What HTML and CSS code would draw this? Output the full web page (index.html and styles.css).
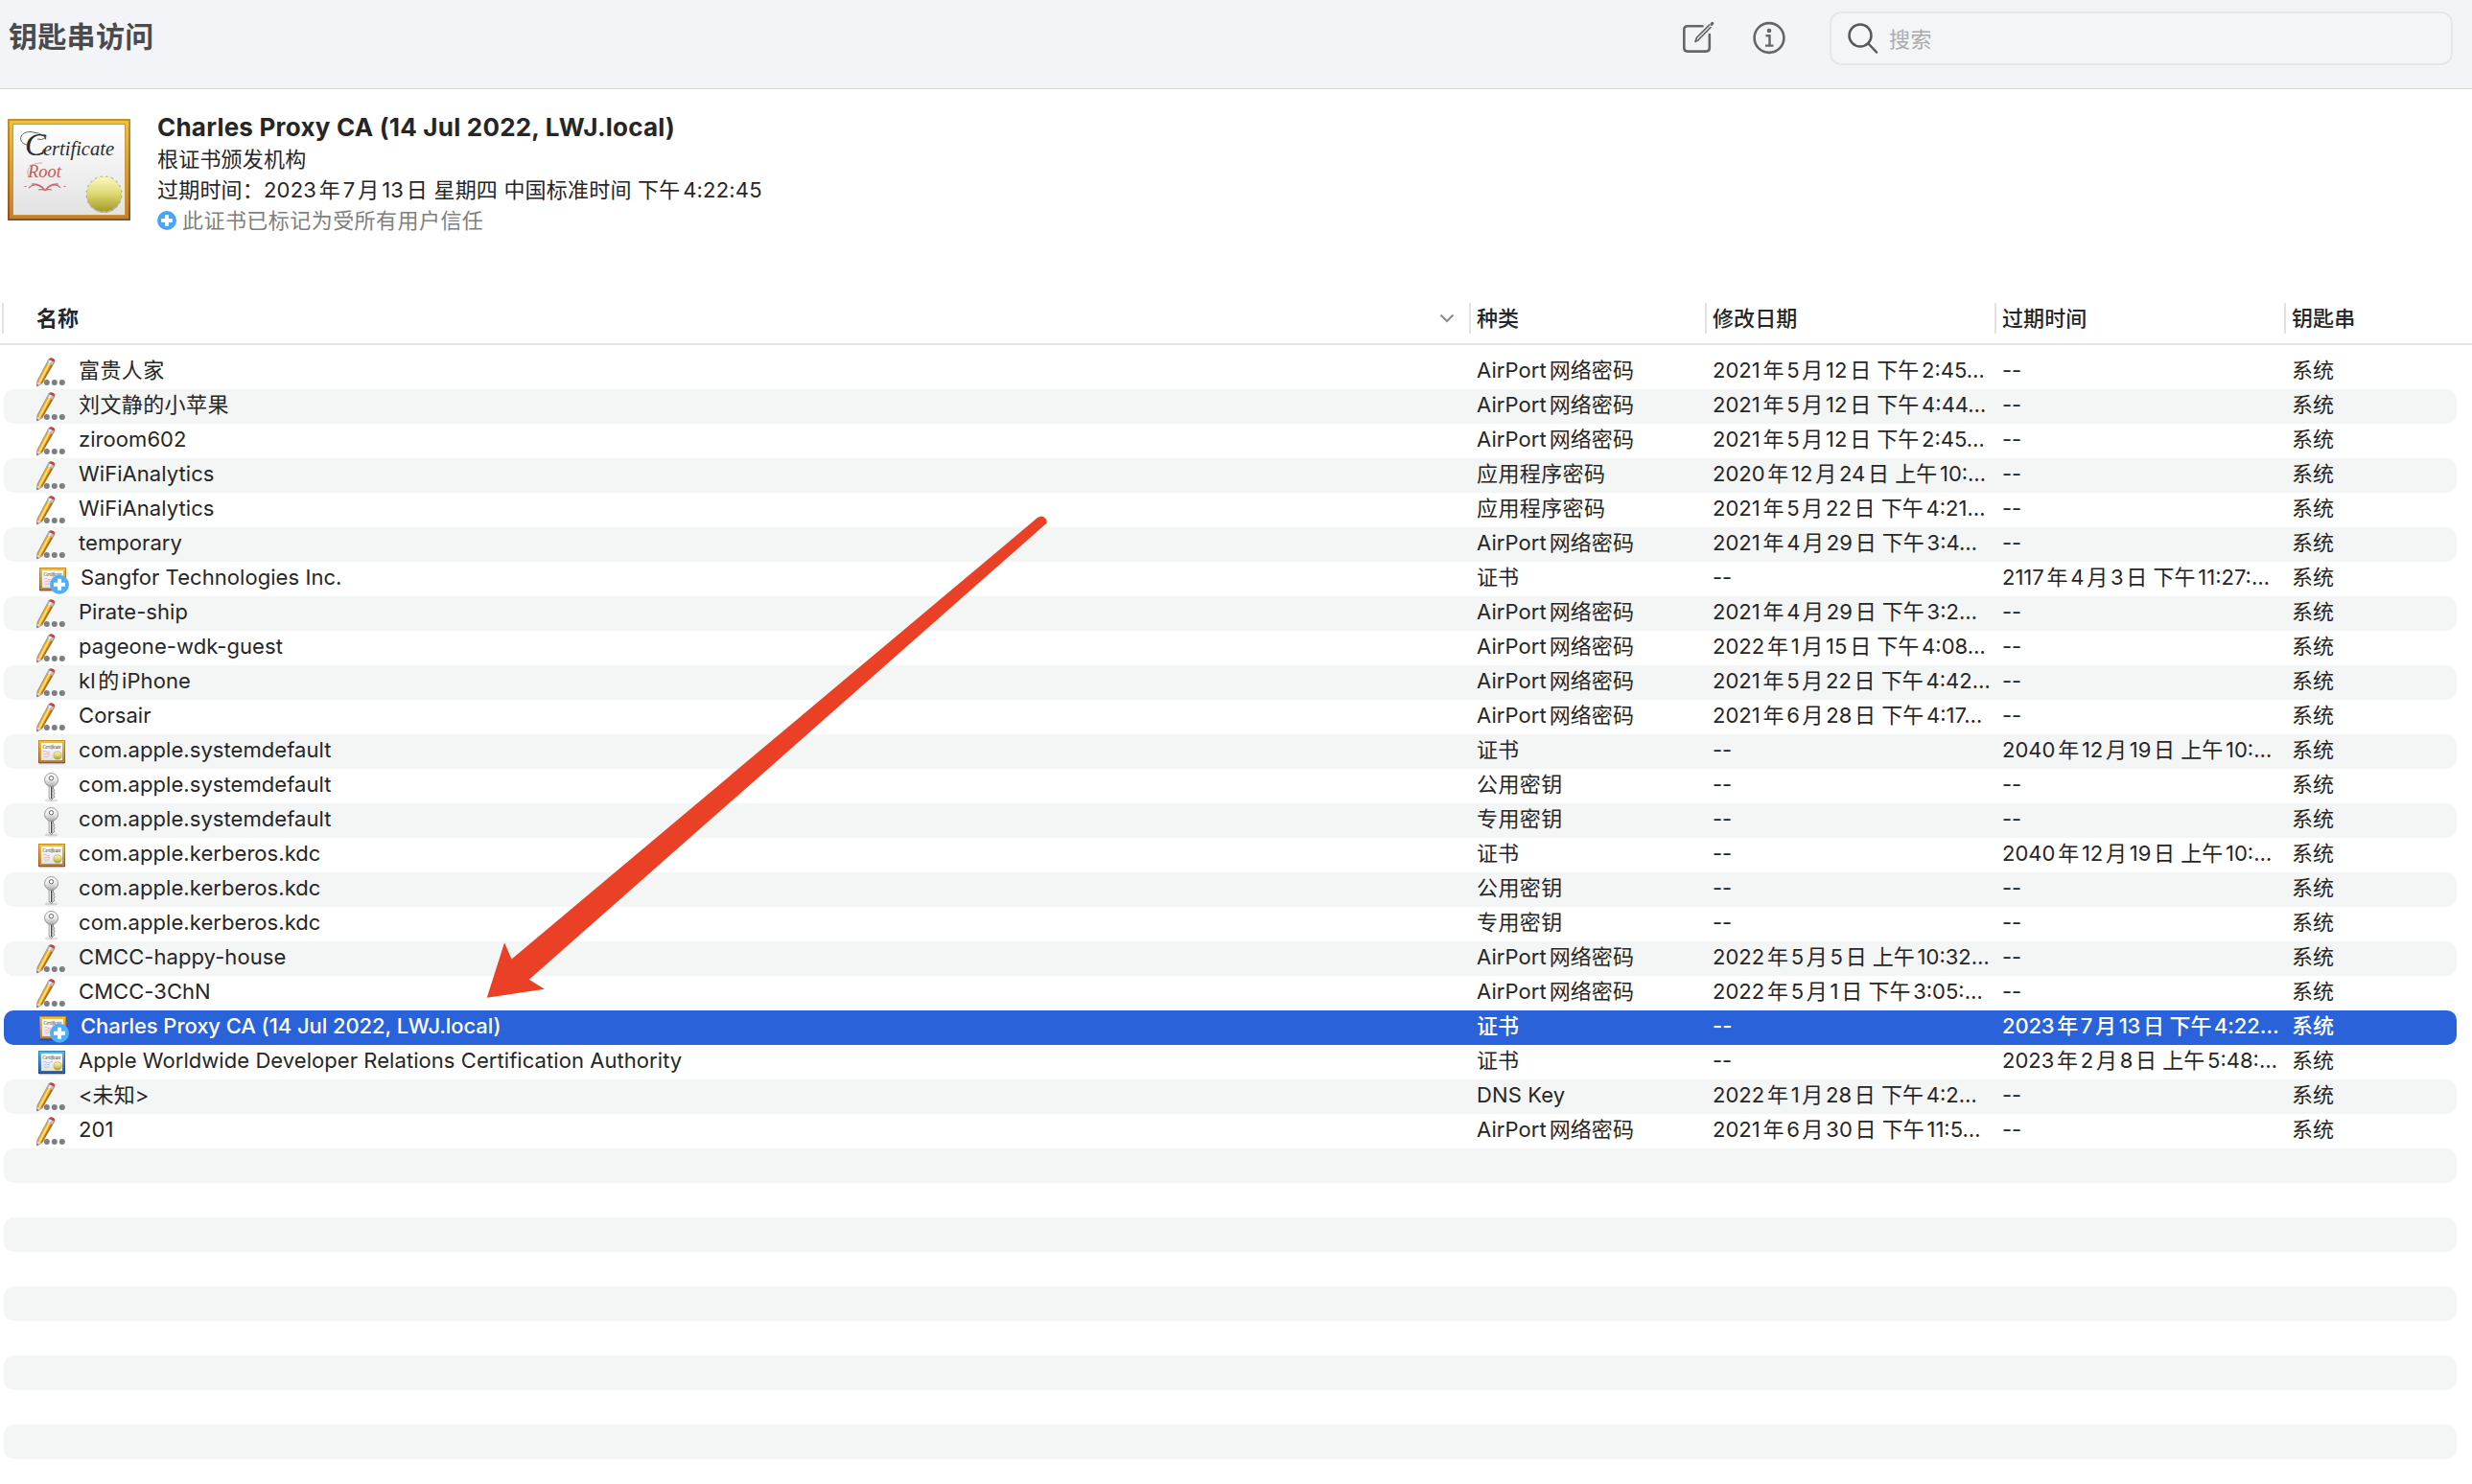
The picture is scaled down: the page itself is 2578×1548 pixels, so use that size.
FILE: index.html
```html
<!DOCTYPE html>
<html lang="zh-CN">
<head>
<meta charset="utf-8">
<title>钥匙串访问</title>
<link rel="stylesheet" href="styles.css">
</head>
<body>
<svg class="defs" width="0" height="0" aria-hidden="true">
  <defs>
    <linearGradient id="gold" x1="0" y1="0" x2="0" y2="1"><stop offset="0" stop-color="#e9c43f"/><stop offset="1" stop-color="#c67f2b"/></linearGradient>
    <linearGradient id="goldEdge" x1="0" y1="0" x2="0" y2="1"><stop offset="0" stop-color="#c98d2b"/><stop offset="1" stop-color="#94501a"/></linearGradient>
    <linearGradient id="blue" x1="0" y1="0" x2="0" y2="1"><stop offset="0" stop-color="#5cb6e4"/><stop offset="1" stop-color="#2a62ad"/></linearGradient>
    <linearGradient id="blueEdge" x1="0" y1="0" x2="0" y2="1"><stop offset="0" stop-color="#3187b8"/><stop offset="1" stop-color="#17458a"/></linearGradient>
    <linearGradient id="paper" x1="0" y1="0" x2="0" y2="1"><stop offset="0" stop-color="#ffffff"/><stop offset="1" stop-color="#e2e2e2"/></linearGradient>
    <linearGradient id="seal" x1="0" y1="0" x2="0" y2="1"><stop offset="0" stop-color="#fbfac0"/><stop offset="0.5" stop-color="#dcd873"/><stop offset="1" stop-color="#a39b20"/></linearGradient>
    <linearGradient id="metal" x1="0" y1="0" x2="0" y2="1"><stop offset="0" stop-color="#ffffff"/><stop offset="0.5" stop-color="#ececec"/><stop offset="1" stop-color="#a8a8a8"/></linearGradient>
    <clipPath id="burst">
      <rect x="-13.8" y="-13.8" width="27.6" height="27.6"/>
      <rect x="-13.8" y="-13.8" width="27.6" height="27.6" transform="rotate(18)"/>
      <rect x="-13.8" y="-13.8" width="27.6" height="27.6" transform="rotate(36)"/>
      <rect x="-13.8" y="-13.8" width="27.6" height="27.6" transform="rotate(54)"/>
      <rect x="-13.8" y="-13.8" width="27.6" height="27.6" transform="rotate(72)"/>
    </clipPath>
    <symbol id="pencil" viewBox="0 0 36 36">
      <path d="M.4 27.600L12.400 4.800q1.500-2.400 4.600-1 3 1.500 2 4.200L6.200 30.200 1.200 33.200Q0 33.500 0 32z" fill="#6d6658" opacity=".75"/>
      <path d="M1 28.200L11.200 8l5.600 2.800L5.600 29.800z" fill="#e9a92c"/>
      <path d="M2.200 28.400L12.600 8.800l1.700.9L4 29.200z" fill="#ffdf70"/>
      <path d="M15.300 10.200l1.600.8L6 29.400l-1.200-.2z" fill="#b06f18"/>
      <path d="M.9 28.400l4.500 1.700-4.200 2.600q-.6.100-.6-.6z" fill="#eccfc0"/>
      <path d="M.5 30.900l1.700.8-1.500 1.100z" fill="#4a3d38"/>
      <path d="M11.200 8.200l1.900-3.500 5.300 2.600-1.900 3.500z" fill="#b9bec9"/>
      <path d="M12.500 8.400l1.700-3 1.500.8-1.600 3z" fill="#f3f5f8"/>
      <path d="M13.200 4.900q1.200-2.200 3.900-1.100 2.700 1.200 1.500 3.700z" fill="#cf3f30"/>
      <circle cx="10.800" cy="29" r="3" fill="#7f7f7f"/><circle cx="18.800" cy="29" r="3" fill="#7f7f7f"/><circle cx="26.800" cy="29" r="3" fill="#7f7f7f"/>
    </symbol>
    <symbol id="cert" viewBox="0 0 36 36">
      <path d="M2.500 30.500h27" stroke="#000" stroke-opacity=".22" stroke-width="1.500"/>
      <rect x="2" y="6" width="28" height="24" fill="url(#goldEdge)"/>
      <rect x="3" y="7" width="26" height="22" fill="url(#gold)"/>
      <rect x="5" y="9" width="22" height="18" fill="url(#paper)"/>
      <text class="script" x="6.500" y="15.300" font-size="6" textLength="19" lengthAdjust="spacingAndGlyphs" fill="#222">Certificate</text>
      <path d="M7 18q2-1.500 3.500 0t3.500.3M7.500 21q3-2 6.500 0M8 23q2.500 1 5-.5" fill="none" stroke="#e8b5b5" stroke-width="1"/>
      <circle cx="22" cy="22" r="4.100" fill="url(#seal)" stroke="#a9a240" stroke-width=".6"/>
    </symbol>
    <symbol id="cert-blue" viewBox="0 0 36 36">
      <path d="M2.500 30.500h27" stroke="#000" stroke-opacity=".22" stroke-width="1.500"/>
      <rect x="2" y="6" width="28" height="24" fill="url(#blueEdge)"/>
      <rect x="3" y="7" width="26" height="22" fill="url(#blue)"/>
      <rect x="5" y="9" width="22" height="18" fill="url(#paper)"/>
      <text class="script" x="6.500" y="15.300" font-size="6" textLength="19" lengthAdjust="spacingAndGlyphs" fill="#222">Certificate</text>
      <path d="M7 18q2-1.500 3.500 0t3.500.3 3-.8M7.500 21q3-2 6.500 0M8 23q2.500 1 5-.5" fill="none" stroke="#a9c9e6" stroke-width="1"/>
      <circle cx="22" cy="22" r="4.100" fill="url(#seal)" stroke="#a9a240" stroke-width=".6"/>
    </symbol>
    <symbol id="cert-plus" viewBox="0 0 36 36">
      <use href="#cert" x="1" width="36" height="36"/>
      <circle cx="24" cy="23.700" r="10" fill="#4fb0f8"/>
      <path d="M24 17.700v12M18 23.700h12" stroke="#fff" stroke-width="4"/>
    </symbol>
    <symbol id="key" viewBox="0 0 36 36">
      <ellipse cx="15.500" cy="33" rx="7" ry="1.600" fill="#000" opacity=".13"/>
      <path d="M13.200 17h4.300v4l1.600 1.300-1.400 1.700 1.600 1.500-1.400 1.800 1.100 1.700-1.500 1.800-1.900 1.900-2.400-2z" fill="#dedede" stroke="#777" stroke-width=".8"/>
      <path d="M14.300 18v12" stroke="#fff" stroke-width="1.100"/>
      <path d="M15.700 18v13" stroke="#333" stroke-width="1.200"/>
      <circle cx="15.500" cy="11.500" r="7" fill="url(#metal)" stroke="#8c8c8c" stroke-width=".9"/>
      <circle cx="15.500" cy="9.700" r="2.200" fill="#fff" stroke="#666" stroke-width="1"/>
    </symbol>
  </defs>
</svg>

<header class="toolbar">
  <h1 class="toolbar-title">钥匙串访问</h1>
  <div class="toolbar-actions">
    <svg class="tool-icon" width="36" height="36" viewBox="0 0 36 36" fill="none" stroke="#66666a" stroke-width="2.600" stroke-linecap="round">
      <path d="M22.500 6.300H7Q3.300 6.300 3.300 10V29Q3.300 32.600 7 32.600H26Q29.800 32.600 29.800 29V15"/>
      <path d="M15 22.400l1.300-4L29.500 5.200M15 22.400l3-1.500L31 7.500" stroke-width="1.700"/>
      <path d="M32 4.200l.8-.8" stroke-width="3.200"/>
    </svg>
    <svg class="tool-icon" width="36" height="36" viewBox="0 0 36 36" fill="none" stroke="#66666a" stroke-width="2.600">
      <circle cx="18" cy="18.500" r="15.400"/>
      <circle cx="18" cy="11" r="2.300" fill="#66666a" stroke="none"/>
      <path d="M14.500 16.300h4v10M14 26.600h8.500" stroke-width="2.400"/>
    </svg>
    <div class="search">
      <svg width="34" height="34" viewBox="0 0 34 34" fill="none" stroke="#58585a" stroke-width="2.500" stroke-linecap="round"><circle cx="14" cy="14" r="11.500"/><path d="M22.500 22.500l8.500 9"/></svg>
      <span class="placeholder">搜索</span>
    </div>
  </div>
</header>

<section class="summary">
  <svg class="summary-icon" width="128" height="106" viewBox="0 0 128 106">
    <rect width="128" height="106" fill="url(#goldEdge)"/>
    <rect x="2" y="2" width="124" height="102" fill="url(#gold)"/>
    <rect x="5.500" y="5.500" width="117" height="95" fill="url(#paper)" stroke="#c9953a" stroke-width="1"/>
    <g class="script">
      <text x="18" y="37.500" font-size="33" fill="#2c2c2c">C</text>
      <text x="37" y="37.500" font-size="22" textLength="74" lengthAdjust="spacingAndGlyphs" fill="#2c2c2c">ertificate</text>
      <text x="21" y="60.500" font-size="19" textLength="35" lengthAdjust="spacingAndGlyphs" fill="#c4595c">Root</text>
    </g>
    <path d="M20 27C10 25 12 13 24 13.500q9 .5 16 5.500-4 4-9 2" fill="none" stroke="#555" stroke-width=".9"/>
    <path d="M22 60C18 50 26 46 36 46" fill="none" stroke="#d08a8c" stroke-width=".8"/>
    <path d="M22 72q5-5 11-2 5 3 6 4.500 1-1.500 6-4.500 6-3 10 2M25 68q9-1 14 6.500 5-7.500 14-6.500M32 74q4-1 7 .5 3-1.500 7-.5M17.500 70.500h2M58.500 70.500h2" fill="none" stroke="#cc6668" stroke-width="1.100"/>
    <g transform="translate(100.500 78.500)">
      <circle cy="1.500" r="18" fill="#000" opacity=".22"/>
      <g clip-path="url(#burst)"><rect x="-20" y="-20" width="40" height="40" fill="#b5af4a"/><circle r="18" fill="url(#seal)"/></g>
    </g>
  </svg>
  <div class="summary-text">
    <h2 class="summary-name">Charles Proxy CA (14 Jul 2022, LWJ.local)</h2>
    <p>根证书颁发机构</p>
    <p>过期时间：2023年7月13日 星期四 中国标准时间 下午4:22:45</p>
    <p class="trust"><svg width="20" height="20" viewBox="0 0 20 20"><circle cx="10" cy="10" r="10" fill="#4aa5f8"/><path d="M10 4.200v11.600M4.200 10h11.600" stroke="#fff" stroke-width="3.800"/></svg>此证书已标记为受所有用户信任</p>
  </div>
</section>

<main class="table">
  <div class="head">
    <div class="th th-name">名称<svg width="16" height="10" viewBox="0 0 16 10" fill="none" stroke="#8e8e8e" stroke-width="2.200"><path d="M1.500 1.500L8 8l6.500-6.500"/></svg></div>
    <div class="th">种类</div><div class="th">修改日期</div><div class="th">过期时间</div><div class="th">钥匙串</div>
  </div>
  <div class="rows">
    <div class="row"><svg class="icon"><use href="#pencil"/></svg><span class="cjk">富贵人家</span><span>AirPort网络密码</span><span>2021年5月12日 下午2:45…</span><span>--</span><span>系统</span></div>
    <div class="row"><svg class="icon"><use href="#pencil"/></svg><span class="cjk">刘文静的小苹果</span><span>AirPort网络密码</span><span>2021年5月12日 下午4:44…</span><span>--</span><span>系统</span></div>
    <div class="row"><svg class="icon"><use href="#pencil"/></svg><span>ziroom602</span><span>AirPort网络密码</span><span>2021年5月12日 下午2:45…</span><span>--</span><span>系统</span></div>
    <div class="row"><svg class="icon"><use href="#pencil"/></svg><span>WiFiAnalytics</span><span class="cjk">应用程序密码</span><span>2020年12月24日 上午10:…</span><span>--</span><span>系统</span></div>
    <div class="row"><svg class="icon"><use href="#pencil"/></svg><span>WiFiAnalytics</span><span class="cjk">应用程序密码</span><span>2021年5月22日 下午4:21…</span><span>--</span><span>系统</span></div>
    <div class="row"><svg class="icon"><use href="#pencil"/></svg><span>temporary</span><span>AirPort网络密码</span><span>2021年4月29日 下午3:4…</span><span>--</span><span>系统</span></div>
    <div class="row trusted"><svg class="icon"><use href="#cert-plus"/></svg><span>Sangfor Technologies Inc.</span><span>证书</span><span>--</span><span>2117年4月3日 下午11:27:…</span><span>系统</span></div>
    <div class="row"><svg class="icon"><use href="#pencil"/></svg><span>Pirate-ship</span><span>AirPort网络密码</span><span>2021年4月29日 下午3:2…</span><span>--</span><span>系统</span></div>
    <div class="row"><svg class="icon"><use href="#pencil"/></svg><span>pageone-wdk-guest</span><span>AirPort网络密码</span><span>2022年1月15日 下午4:08…</span><span>--</span><span>系统</span></div>
    <div class="row"><svg class="icon"><use href="#pencil"/></svg><span>kl的iPhone</span><span>AirPort网络密码</span><span>2021年5月22日 下午4:42…</span><span>--</span><span>系统</span></div>
    <div class="row"><svg class="icon"><use href="#pencil"/></svg><span>Corsair</span><span>AirPort网络密码</span><span>2021年6月28日 下午4:17…</span><span>--</span><span>系统</span></div>
    <div class="row"><svg class="icon"><use href="#cert"/></svg><span>com.apple.systemdefault</span><span>证书</span><span>--</span><span>2040年12月19日 上午10:…</span><span>系统</span></div>
    <div class="row"><svg class="icon"><use href="#key"/></svg><span>com.apple.systemdefault</span><span class="cjk">公用密钥</span><span>--</span><span>--</span><span>系统</span></div>
    <div class="row"><svg class="icon"><use href="#key"/></svg><span>com.apple.systemdefault</span><span class="cjk">专用密钥</span><span>--</span><span>--</span><span>系统</span></div>
    <div class="row"><svg class="icon"><use href="#cert"/></svg><span>com.apple.kerberos.kdc</span><span>证书</span><span>--</span><span>2040年12月19日 上午10:…</span><span>系统</span></div>
    <div class="row"><svg class="icon"><use href="#key"/></svg><span>com.apple.kerberos.kdc</span><span class="cjk">公用密钥</span><span>--</span><span>--</span><span>系统</span></div>
    <div class="row"><svg class="icon"><use href="#key"/></svg><span>com.apple.kerberos.kdc</span><span class="cjk">专用密钥</span><span>--</span><span>--</span><span>系统</span></div>
    <div class="row"><svg class="icon"><use href="#pencil"/></svg><span>CMCC-happy-house</span><span>AirPort网络密码</span><span>2022年5月5日 上午10:32…</span><span>--</span><span>系统</span></div>
    <div class="row"><svg class="icon"><use href="#pencil"/></svg><span>CMCC-3ChN</span><span>AirPort网络密码</span><span>2022年5月1日 下午3:05:…</span><span>--</span><span>系统</span></div>
    <div class="row trusted selected"><svg class="icon"><use href="#cert-plus"/></svg><span>Charles Proxy CA (14 Jul 2022, LWJ.local)</span><span>证书</span><span>--</span><span>2023年7月13日 下午4:22…</span><span>系统</span></div>
    <div class="row"><svg class="icon"><use href="#cert-blue"/></svg><span>Apple Worldwide Developer Relations Certification Authority</span><span>证书</span><span>--</span><span>2023年2月8日 上午5:48:…</span><span>系统</span></div>
    <div class="row"><svg class="icon"><use href="#pencil"/></svg><span>&lt;未知&gt;</span><span>DNS Key</span><span>2022年1月28日 下午4:2…</span><span>--</span><span>系统</span></div>
    <div class="row"><svg class="icon"><use href="#pencil"/></svg><span>201</span><span>AirPort网络密码</span><span>2021年6月30日 下午11:5…</span><span>--</span><span>系统</span></div>
    <div class="row"></div><div class="row"></div><div class="row"></div><div class="row"></div><div class="row"></div>
    <div class="row"></div><div class="row"></div><div class="row"></div><div class="row"></div>
  </div>
</main>

<svg class="arrow" width="600" height="520" viewBox="500 530 600 520"><path d="M507.800 1040.700L526.100 983.200 533.500 1000.400 1082 540Q1087 536.500 1090.500 541 1093.500 545.500 1089.500 547.500L551.800 1021.800 567.800 1031.800Z" fill="#ea4126"/></svg>
</body>
</html>
```
FILE: styles.css
```css
* { box-sizing: border-box; }

body {
  margin: 0;
  height: 1548px;
  overflow: hidden;
  position: relative;
  background: #fff;
  color: #262626;
  font: 22px/36px Inter, "Noto Sans CJK SC", sans-serif;
  letter-spacing: 0.1px;
  text-autospace: normal;
}

h1, h2, p { margin: 0; }
svg { display: block; flex: none; }
.defs { position: absolute; }
.script { font-family: "Liberation Serif", serif; font-style: italic; letter-spacing: 0; }

/* Toolbar */
.toolbar {
  display: flex;
  justify-content: space-between;
  height: 93px;
  padding: 12px 20px 0 9px;
  background: #f3f4f8;
  border-bottom: 1px solid #d5d5d8;
}
.toolbar-title {
  padding-top: 1px;
  font-size: 30px;
  line-height: 50px;
  font-weight: 700;
  letter-spacing: 0.3px;
  color: #4b4b4d;
}
.toolbar-actions { display: flex; align-items: flex-start; }
.tool-icon { margin: 9px 38px 0 0; }
.search {
  display: flex;
  align-items: center;
  gap: 10px;
  width: 650px;
  height: 56px;
  margin-left: 7px;
  padding: 0 16px;
  border: 2px solid #e7e7eb;
  border-radius: 12px;
  background: #f4f5f9;
}
.placeholder { padding-top: 2px; color: #ababae; letter-spacing: 0.6px; }

/* Summary of the selected item */
.summary { display: flex; gap: 28px; height: 221px; padding: 31px 8px 0; }
.summary-text { line-height: 32px; }
.summary-name {
  margin: -7px 0 1px;
  font-size: 26px;
  line-height: 32px;
  font-weight: 700;
  letter-spacing: 0.22px;
}
.summary-text p { height: 32px; letter-spacing: 0.2px; }
.summary-text .trust {
  display: flex;
  align-items: center;
  gap: 6px;
  color: #7f7f7f;
  letter-spacing: 0.45px;
}

/* Table */
.head {
  display: grid;
  grid-template-columns: 1530px 246px 302px 302px 1fr;
  height: 46px;
  padding: 2px 0 10px 2px;
  border-bottom: 2px solid #e4e4e4;
}
.th {
  height: 32px;
  padding-left: 6px;
  border-left: 2px solid #e2e2e2;
  line-height: 32px;
  font-weight: 500;
}
.th-name {
  display: flex;
  align-items: center;
  justify-content: space-between;
  padding: 0 15px 0 34px;
  font-weight: 700;
}
.rows { padding: 10px 16px 0 4px; }
.row {
  display: grid;
  grid-template-columns: 44px 1458px 246px 302px 302px 1fr;
  height: 36px;
  padding-left: 34px;
  border-radius: 10px;
  line-height: 32px;
  white-space: nowrap;
}
.row:nth-child(even) { background: #f4f5f5; }
.row .cjk { letter-spacing: 0.4px; }
.icon { width: 36px; height: 36px; }
.row > span:nth-child(2) { letter-spacing: 0.06px; }
.row > .cjk:nth-child(2) { letter-spacing: 0.4px; }
.row > span:nth-child(4) { letter-spacing: 0; }
.row > span:nth-child(5) { letter-spacing: 0; }
.trusted > span:nth-child(2) { padding-left: 2px; }
.row.selected { background: #2962d9; color: #fff; font-weight: 500; letter-spacing: 0; }
.row.selected > span:nth-child(2) { letter-spacing: -0.07px; }
.row.selected > span:nth-child(5) { letter-spacing: -0.15px; }

/* Annotation drawn over the list */
.arrow { position: absolute; left: 500px; top: 530px; }
```
